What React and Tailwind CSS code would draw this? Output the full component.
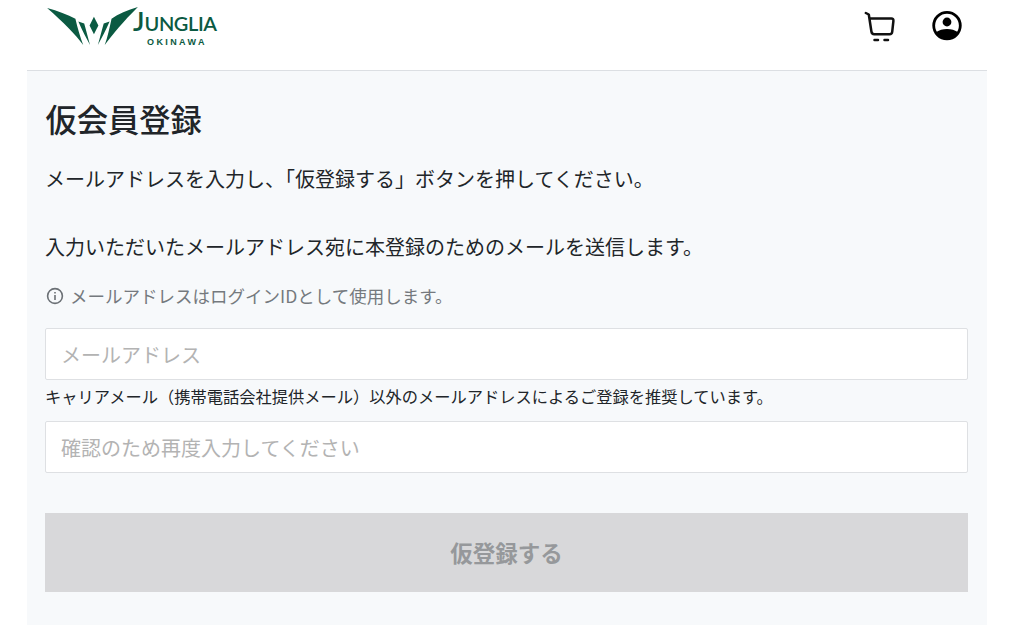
import React from 'react';

const jp = { fontFamily: '"Noto Sans CJK JP", sans-serif' };

function Logo() {
  return (
    <div className="flex items-start">
      <svg width="91" height="41" viewBox="0 0 93 42" className="mt-[6px] shrink-0">
        <g fill="#0b5a42">
          <path d="M0 2 C11 5 21 9 29 13 C31 22 34 32 37 40 C29 29 17 17 0 2Z" />
          <path d="M93 1 C82 4 73 8 66 13 C64 22 62 32 59 40 C67 29 78 16 93 1Z" />
          <path d="M32 16 L38 18 C40 25 42 33 44 40 C40 33 36 25 32 16Z" />
          <path d="M64 16 L58 18 C56 25 54 33 52 40 C56 33 60 25 64 16Z" />
          <path d="M48 11 L52.5 20 L48 29 L43.5 20Z" />
        </g>
      </svg>
      <div className="ml-[-5px] mt-[9px] flex flex-col text-[#0b5a42]">
        <div className="flex items-baseline font-semibold" style={{ fontFamily: 'Lato, sans-serif' }}>
          <span className="text-[27px] leading-[24px]">J</span>
          <span className="text-[20px] leading-[24px] tracking-[-0.4px]">UNGLIA</span>
        </div>
        <span className="text-[9px] leading-[9px] font-bold tracking-[2.4px] mt-[3px] ml-[14px]" style={{ fontFamily: '"Liberation Sans", sans-serif' }}>
          OKINAWA
        </span>
      </div>
    </div>
  );
}

function CartIcon() {
  return (
    <svg width="32" height="32" viewBox="0 0 32 32" fill="none" stroke="#111" strokeWidth="2.5" strokeLinecap="round" strokeLinejoin="round">
      <path d="M2.8 3 L5.8 4.5 L8.4 21.5 C8.7 23.4 9.6 24.2 11.2 24.2 L26.6 24.2 C28.2 24.2 29 23.4 29.2 21.8 L30.4 11 C30.6 9.4 29.8 8.5 28.4 8.5 L6.4 8.5" />
      <path d="M11.5 30 L15 30 M21.5 30 L25 30" />
    </svg>
  );
}

function UserIcon() {
  return (
    <svg width="32" height="32" viewBox="0 0 32 32">
      <circle cx="16" cy="15.6" r="13.3" fill="#fff" stroke="#000" strokeWidth="2.8" />
      <circle cx="16" cy="12" r="4.4" fill="#000" />
      <path d="M4.5 22.5 C8 20 12 19 16 19 C20 19 24 20 27.5 22.5 C25 27 20.5 29.2 16 29.2 C11.5 29.2 7 27 4.5 22.5Z" fill="#000" />
    </svg>
  );
}

function InfoIcon() {
  return (
    <svg width="18" height="18" viewBox="0 0 18 18" fill="none" stroke="#6b7075" strokeWidth="1.6" className="ml-px">
      <circle cx="9" cy="9" r="7.4" />
      <path d="M9 8 V13" />
      <path d="M9 5 V6.4" />
    </svg>
  );
}

export default function App() {
  return (
    <div className="w-[960px] h-[625px] ml-[27px] overflow-hidden bg-white" style={jp}>
      <header className="h-[71px] border-b border-[#dcdfe3] flex items-start justify-between pl-[20px] pr-[24px]">
        <Logo />
        <div className="flex items-center gap-[36px] mt-[10px]">
          <CartIcon />
          <UserIcon />
        </div>
      </header>
      <main className="bg-[#f7f9fb] h-[554px] pl-[18px] pr-[19px] pt-[26px]">
        <h1 className="ml-[0.5px] text-[31.25px] leading-[44px] font-medium text-[#212529]">仮会員登録</h1>
        <p className="mt-[21px] text-[20px] leading-[34px] text-[#212529]">メールアドレスを入力し、「仮登録する」ボタンを押してください。</p>
        <p className="mt-[34px] text-[20px] leading-[34px] text-[#212529]">入力いただいたメールアドレス宛に本登録のためのメールを送信します。</p>
        <div className="mt-[18px] flex items-center gap-[6px] text-[17.5px] leading-[28px] text-[#75797e]">
          <InfoIcon />
          <span>メールアドレスはログインIDとして使用します。</span>
        </div>
        <input
          type="text"
          placeholder="メールアドレス"
          className="mt-[18px] block w-full h-[52px] bg-white border border-[#dee0e3] rounded-[2px] px-[15px] text-[20px] placeholder:text-[#b3b3b3]"
        />
        <p className="mt-[3px] text-[16.25px] leading-[26px] text-[#212529]">キャリアメール（携帯電話会社提供メール）以外のメールアドレスによるご登録を推奨しています。</p>
        <input
          type="text"
          placeholder="確認のため再度入力してください"
          className="mt-[12px] block w-full h-[52px] bg-white border border-[#dee0e3] rounded-[2px] px-[15px] text-[20px] placeholder:text-[#b3b3b3]"
        />
        <button className="mt-[40px] block w-full h-[79px] bg-[#d8d8da] text-[#96989b] text-[22.5px] font-bold">仮登録する</button>
      </main>
    </div>
  );
}
